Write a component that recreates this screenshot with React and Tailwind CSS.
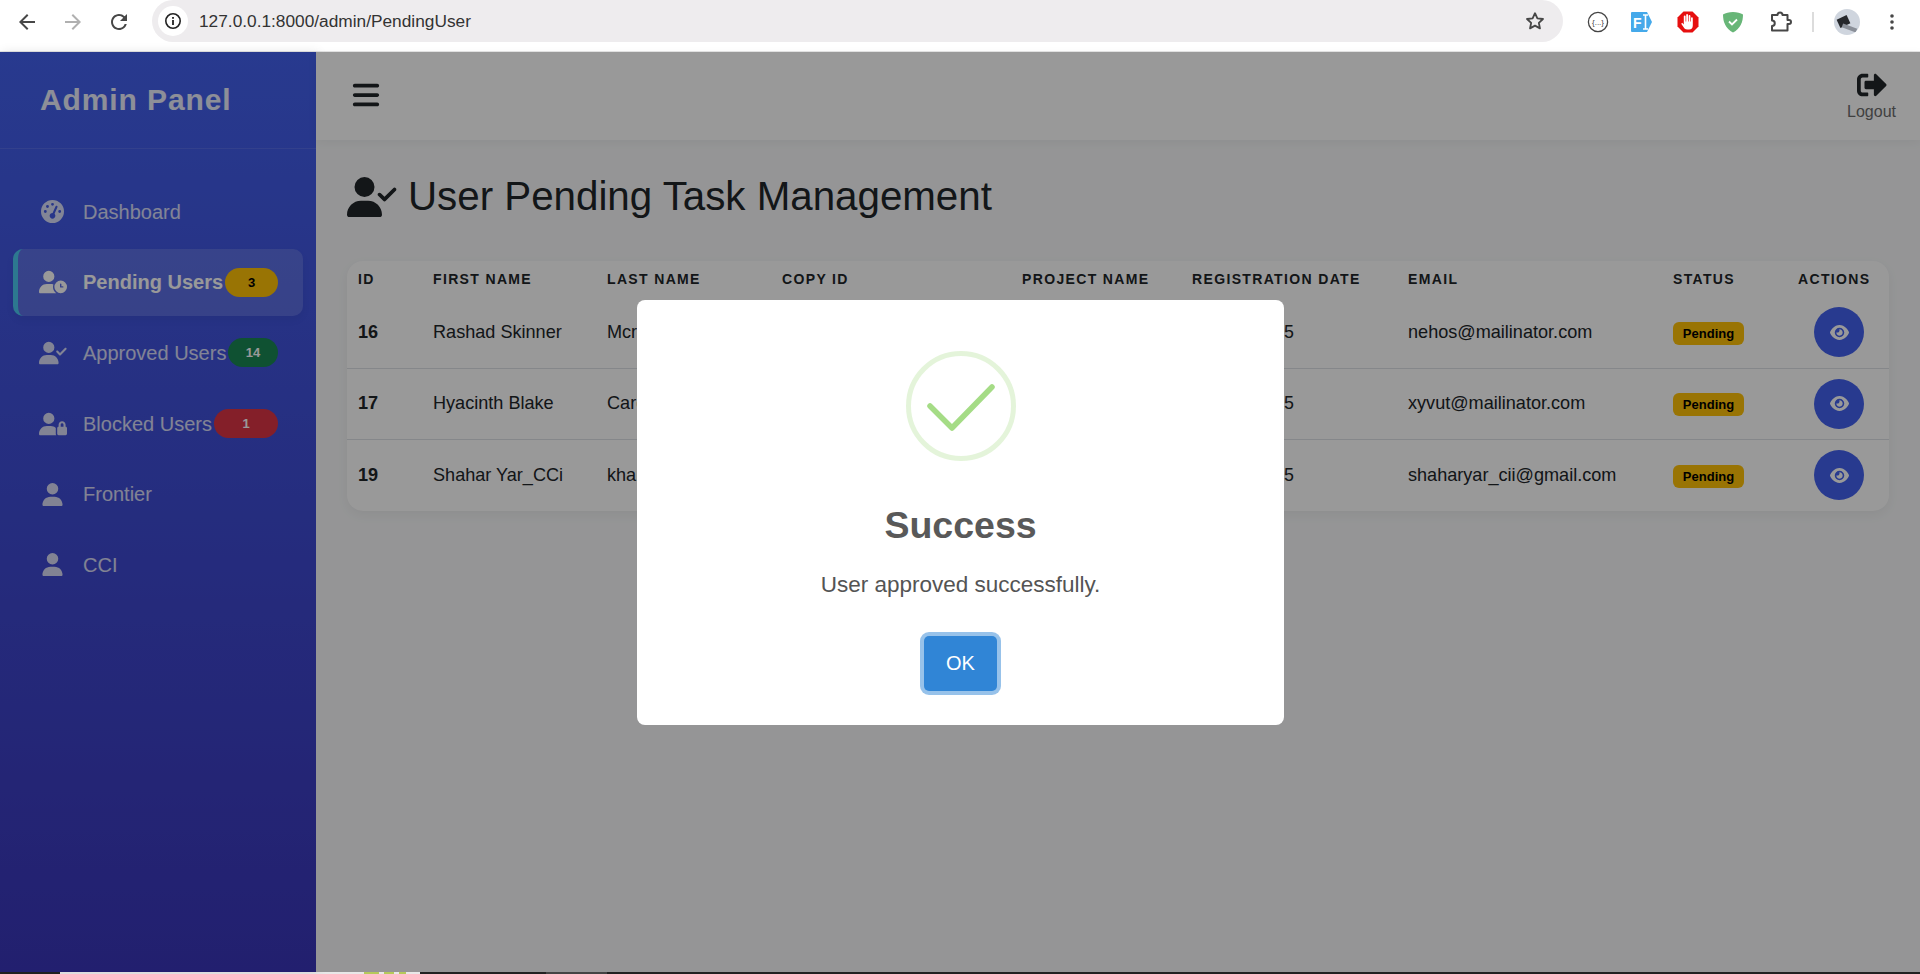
import React from 'react';
import { FaSignOutAlt } from 'react-icons/fa';
import {
  FaBars,
  FaEye,
  FaGaugeHigh,
  FaUser,
  FaUserCheck,
  FaUserClock,
  FaUserLock,
} from 'react-icons/fa6';

const navItems = [
  { label: 'Dashboard', icon: FaGaugeHigh, iconSize: 'text-[23px]' },
  { label: 'Pending Users', icon: FaUserClock, active: true, badge: '3', badgeClass: 'w-[53px] bg-[#ffc107] text-black' },
  { label: 'Approved Users', icon: FaUserCheck, badge: '14', badgeClass: 'w-[50px] bg-[#198754] text-white' },
  { label: 'Blocked Users', icon: FaUserLock, badge: '1', badgeClass: 'w-[64px] bg-[#dc3545] text-white' },
  { label: 'Frontier', icon: FaUser, iconSize: 'text-[23px]' },
  { label: 'CCI', icon: FaUser, iconSize: 'text-[23px]' },
];

const users = [
  { id: 16, first: 'Rashad Skinner', last: 'Mcrae', date: 'Apr 05, 2025', email: 'nehos@mailinator.com', rowHeight: 'h-[71px]' },
  { id: 17, first: 'Hyacinth Blake', last: 'Carey', date: 'Apr 05, 2025', email: 'xyvut@mailinator.com', rowHeight: 'h-[71px]' },
  { id: 19, first: 'Shahar Yar_CCi', last: 'khan', date: 'Apr 05, 2025', email: 'shaharyar_cii@gmail.com', rowHeight: 'h-[72px]' },
];

const columns = [
  { label: 'ID', width: 'w-[75px]' },
  { label: 'First Name', width: 'w-[174px]' },
  { label: 'Last Name', width: 'w-[175px]' },
  { label: 'Copy ID', width: 'w-[240px]' },
  { label: 'Project Name', width: 'w-[170px]' },
  { label: 'Registration Date', width: 'w-[216px]' },
  { label: 'Email', width: 'w-[265px]' },
  { label: 'Status', width: 'w-[125px]' },
  { label: 'Actions', width: 'w-[102px]' },
];

const BrowserBar = () => (
  <div className="flex h-[52px] shrink-0 items-start border-b border-[#e4e4e4] bg-white">
    <div className="flex h-[44px] w-[152px] shrink-0 items-center gap-[22px] pl-[15px]">
      <svg width="24" height="24" viewBox="0 0 24 24" fill="#474747" className="shrink-0">
        <path d="M20 11H7.83l5.59-5.59L12 4l-8 8 8 8 1.41-1.41L7.83 13H20v-2z" />
      </svg>
      <svg width="24" height="24" viewBox="0 0 24 24" fill="#b0b0b0" className="shrink-0">
        <path d="M4 11h12.17l-5.59-5.59L12 4l8 8-8 8-1.41-1.41L16.17 13H4v-2z" />
      </svg>
      <svg width="24" height="24" viewBox="0 0 24 24" fill="#474747" className="shrink-0">
        <path d="M17.65 6.35A7.958 7.958 0 0 0 12 4c-4.42 0-7.99 3.58-7.99 8s3.57 8 7.99 8c3.73 0 6.84-2.55 7.73-6h-2.08A5.99 5.99 0 0 1 12 18c-3.31 0-6-2.69-6-6s2.69-6 6-6c1.66 0 3.14.69 4.22 1.78L13 11h7V4l-2.35 2.35z" />
      </svg>
    </div>
    <div className="flex h-[42px] w-[1411px] shrink-0 items-center rounded-[21px] bg-[#eeecee] pl-[6px] pr-[17px]">
      <div className="flex h-[30px] w-[30px] items-center justify-center rounded-full bg-white">
        <svg width="18" height="18" viewBox="0 0 18 18" fill="none">
          <circle cx="9" cy="9" r="7.2" stroke="#222" strokeWidth="1.6" />
          <rect x="8.1" y="8" width="1.8" height="5" fill="#222" />
          <rect x="8.1" y="5" width="1.8" height="1.8" fill="#222" />
        </svg>
      </div>
      <span className="ml-[11px] mt-[2px] text-[17.3px] text-[#333]">127.0.0.1:8000/admin/PendingUser</span>
      <svg width="22" height="22" viewBox="0 0 24 24" fill="none" stroke="#474747" strokeWidth="2" strokeLinejoin="round" className="ml-auto">
        <path d="M12 3.5l2.6 5.6 6.1.7-4.5 4.2 1.2 6-5.4-3-5.4 3 1.2-6-4.5-4.2 6.1-.7z" />
      </svg>
    </div>
    <div className="flex h-[44px] flex-1 items-center">
      {/* extension icons */}
      <svg width="22" height="22" viewBox="0 0 22 22" fill="none" className="ml-[24px] shrink-0">
        <circle cx="11" cy="11" r="9.6" stroke="#444" strokeWidth="1.3" />
        <text x="11" y="14" textAnchor="middle" fontSize="8" fill="#444">{'{...}'}</text>
      </svg>
      <svg width="22" height="22" viewBox="0 0 22 22" className="ml-[22px] shrink-0">
        <path d="M0 2 Q0 1 1 1 H16 L21 11 L16 21 H1 Q0 21 0 20 Z" fill="#45a9ea" />
        <text x="2" y="16.5" fontSize="14" fontWeight="700" fill="#fff">F</text>
        <path d="M12 4h5M12 18h5M14.5 4v14" stroke="#fff" strokeWidth="1.6" fill="none" />
      </svg>
      <svg width="22" height="22" viewBox="0 0 22 22" className="ml-[24px] shrink-0">
        <path d="M6.5 0.5h9l6 6v9l-6 6h-9l-6-6v-9z" fill="#e60f0f" />
        <path d="M6.8 8.200v5.300L5.200 11.800 4.200 12.700 7.500 17.500Q8.500 18.500 10.500 18.500H12Q15.800 18.500 15.800 14.500V7.200a.9.9 0 0 0-1.800 0V10.500h-.6V4.900a.9.9 0 0 0-1.800 0V10.500h-.6V4a.9.9 0 0 0-1.800 0V10.500h-.6V5.300a.9.9 0 0 0-1.800 0z" fill="#fff" />
      </svg>
      <svg width="22" height="22" viewBox="0 0 22 22" className="ml-[23px] shrink-0">
        <path d="M11 1C7 1 3.500 2.200 1 3.500 1 11 3.500 17.500 11 21.500 18.500 17.500 21 11 21 3.500 18.500 2.200 15 1 11 1z" fill="#68b678" />
        <path d="M7 10.500l3 3 5-5" stroke="#fff" strokeWidth="1.8" fill="none" />
      </svg>
      <svg width="24" height="24" viewBox="0 0 24 24" fill="none" stroke="#474747" strokeWidth="2" strokeLinejoin="round" className="ml-[24px] shrink-0">
        <path d="M4 5h5.500a2.500 2.500 0 0 1 5 0H19.500v5h1.500a2 2 0 0 1 0 4h-1.500v6.500H4v-4.500a2.500 2.500 0 0 0 0-5.500z" />
      </svg>
      <div className="ml-[20px] h-[20px] w-[2px] shrink-0 bg-[#dcdcdc]" />
      <div className="relative ml-[20px] h-[26px] w-[26px] shrink-0 overflow-hidden rounded-full bg-[#cfd5de]">
        <div className="absolute left-[4px] top-[8px] h-[9px] w-[11px] rotate-[-25deg] bg-[#26282c]" />
        <div className="absolute left-[8px] top-[17px] h-[4px] w-[15px] rotate-[20deg] bg-[#8a8f98]" />
      </div>
      <svg width="6" height="20" viewBox="0 0 6 20" fill="#474747" className="ml-[29px] shrink-0">
        <circle cx="3" cy="4" r="1.800" />
        <circle cx="3" cy="10" r="1.800" />
        <circle cx="3" cy="16" r="1.800" />
      </svg>
    </div>
  </div>
);

const Sidebar = () => (
  <aside className="flex w-[316px] shrink-0 flex-col bg-gradient-to-b from-[#4361ee] to-[#3a35b9] shadow-[2px_0_10px_rgba(0,0,0,0.1)]">
    <div className="flex h-[97px] shrink-0 items-center border-b border-white/10 pb-[2px] pl-[40px]">
      <h1 className="text-[30px] font-bold tracking-[0.9px] text-white/90">Admin Panel</h1>
    </div>
    <nav className="flex flex-col gap-[4px] px-[13px] pt-[29.5px]">
      {navItems.map((item) => {
        const Icon = item.icon;
        return (
          <div
            key={item.label}
            className={`flex h-[66.6px] items-center rounded-[10px] pr-[25px] text-[20px] ${
              item.active
                ? 'border-l-[5px] border-[#4cc9f0] bg-white/15 pl-[20px] font-bold text-white shadow-[0_4px_8px_rgba(0,0,0,0.05)]'
                : 'border-l-[5px] border-transparent pl-[20px] text-white/80'
            }`}
          >
            <span className={`flex w-[29px] shrink-0 justify-center ${item.iconSize || 'text-[28px]'}`}>
              <Icon />
            </span>
            <span className="ml-[16px] whitespace-nowrap">{item.label}</span>
            {item.badge && (
              <span className={`ml-auto flex h-[29px] shrink-0 items-center justify-center rounded-full text-[13px] font-bold ${item.badgeClass}`}>
                {item.badge}
              </span>
            )}
          </div>
        );
      })}
    </nav>
  </aside>
);

const UsersTable = () => (
  <div className="overflow-hidden rounded-[16px] bg-white shadow-[0_4px_12px_rgba(0,0,0,0.05)]">
    <table className="w-full table-fixed border-collapse text-left text-[18.1px] text-[#212529]">
      <thead>
        <tr className="h-[36px]">
          {columns.map((col) => (
            <th key={col.label} className={`${col.width} px-[11px] pt-[1px] text-[14px] font-bold uppercase tracking-[1.35px] whitespace-nowrap`}>
              {col.label}
            </th>
          ))}
        </tr>
      </thead>
      <tbody>
        {users.map((user, i) => (
          <tr key={user.id} className={`${user.rowHeight} ${i < 2 ? 'border-b border-[#dee2e6]' : ''}`}>
            <td className="px-[11px] font-bold">{user.id}</td>
            <td className="px-[11px]">{user.first}</td>
            <td className="px-[11px]">{user.last}</td>
            <td className="px-[11px]"></td>
            <td className="px-[11px]"></td>
            <td className="px-[11px] text-[17.8px] whitespace-nowrap">{user.date}</td>
            <td className="px-[11px] whitespace-nowrap">{user.email}</td>
            <td className="px-[11px]">
              <span className="inline-flex h-[23px] w-[71px] items-center justify-center rounded-[6px] bg-[#ffc107] text-[13px] font-bold text-black">Pending</span>
            </td>
            <td className="px-[11px]">
              <button className="ml-[16px] flex h-[50px] w-[50px] items-center justify-center rounded-full bg-[#4361ee] text-[19px] text-white">
                <FaEye />
              </button>
            </td>
          </tr>
        ))}
      </tbody>
    </table>
  </div>
);

const SuccessDialog = () => (
  <div className="absolute inset-0 z-10 flex items-center justify-center bg-black/40">
    <div className="ml-[1px] flex h-[425px] w-[647px] flex-col items-center rounded-[8px] bg-white pt-[51px]">
      <svg width="110" height="110" viewBox="0 0 110 110" fill="none">
        <circle cx="55" cy="55" r="52.500" stroke="#a5dc86" strokeOpacity="0.3" strokeWidth="5" />
        <path d="M24 55L46 77L86 36" stroke="#a5dc86" strokeWidth="5.500" strokeLinecap="round" strokeLinejoin="round" />
      </svg>
      <h2 className="mt-[41px] text-[37.5px] font-bold leading-[46px] text-[#595959]">Success</h2>
      <p className="mt-[20px] text-[22.500px] leading-[34px] text-[#545454]">User approved successfully.</p>
      <button className="mt-[34px] h-[55px] w-[73px] rounded-[5px] bg-[#3085d6] text-[20px] text-white shadow-[0_0_0_4px_rgba(48,133,214,0.5)]">OK</button>
    </div>
  </div>
);

const App = () => {
  return (
    <div className="flex h-[974px] w-[1920px] flex-col overflow-hidden bg-white font-['Liberation_Sans',sans-serif]">
      <BrowserBar />
      <div className="relative flex min-h-0 flex-1">
        <Sidebar />
        <div className="flex min-w-0 flex-1 flex-col bg-[#f8f9fa]">
          <header className="flex h-[88px] shrink-0 items-center justify-between bg-white pl-[35px] pr-[24px] shadow-[0_2px_10px_rgba(0,0,0,0.05)]">
            <FaBars className="mb-[2px] text-[30px] text-[#212529]" />
            <div className="flex flex-col items-center text-[#6c6c6c]">
              <FaSignOutAlt className="text-[30px] text-[#212529]" />
              <span className="mt-[2px] text-[16px] leading-[20px]">Logout</span>
            </div>
          </header>
          <main className="flex-1 pl-[31px] pr-[31px] pt-[33px]">
            <div className="flex items-center text-[#212529]">
              <FaUserCheck className="h-[40px] w-[50px]" />
              <h2 className="ml-[11px] text-[40.3px] font-normal leading-[48px]">User Pending Task Management</h2>
            </div>
            <div className="mt-[40px]">
              <UsersTable />
            </div>
          </main>
        </div>
        <SuccessDialog />
      </div>
      <div className="flex h-[2px] shrink-0 bg-[#222]">
        <div className="ml-[60px] h-full w-[304px] bg-[#e8e8e8]" />
        <div className="h-full w-[15px] bg-[#b5c95a]" />
        <div className="h-full w-[5px] bg-[#e8e8e8]" />
        <div className="h-full w-[10px] bg-[#b5c95a]" />
        <div className="h-full w-[5px] bg-[#e8e8e8]" />
        <div className="h-full w-[7px] bg-[#b5c95a]" />
        <div className="h-full w-[14px] bg-[#e8e8e8]" />
        <div className="ml-[126px] h-full w-[61px] bg-[#444]" />
      </div>
    </div>
  );
};

export default App;
